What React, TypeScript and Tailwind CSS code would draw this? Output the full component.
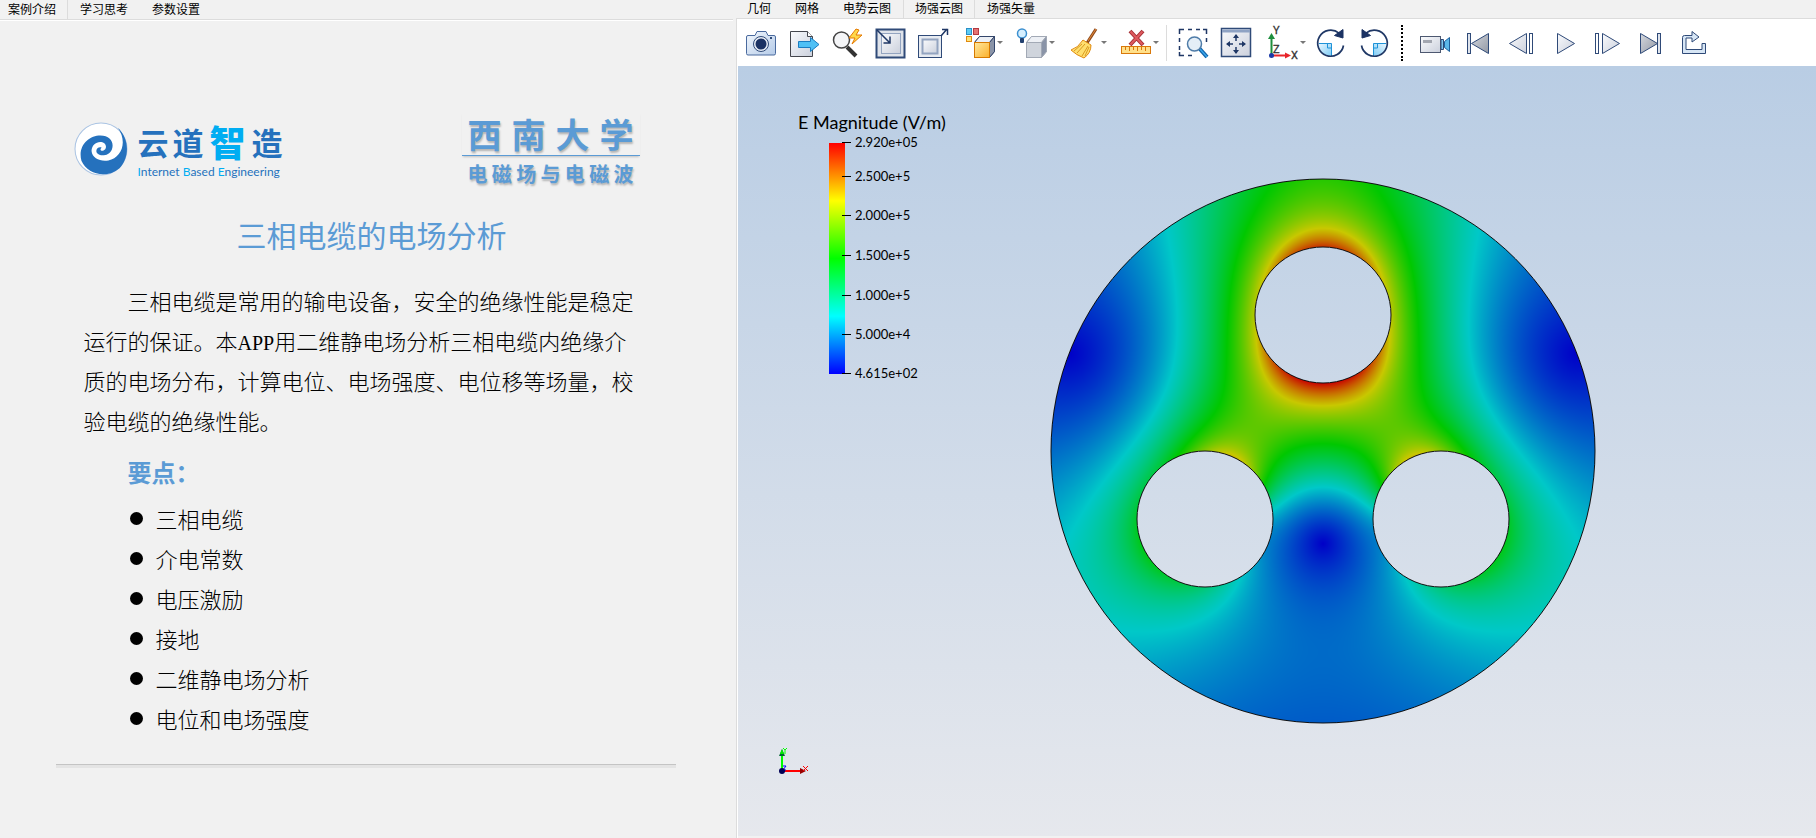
import {useEffect, useRef} from "react";
import type {ReactNode} from "react";

const SIZE = 546;
const OUTER = 272;
const HOLE = 68;

// conductor centres relative to the cable axis, y up, and their potentials
const CONDUCTORS = [
    {x: 0, y: 136, v: 1},
    {x: -118, y: -68, v: -0.5},
    {x: 118, y: -68, v: -0.5},
];

const PER_CONDUCTOR = 16;

type Charge = {x: number; y: number; ix: number; iy: number; k: number; q: number};

const solveLinear = (a: number[][], b: number[]) => {
    const n = b.length;
    for (let c = 0; c < n; c++) {
        let p = c;
        for (let r = c + 1; r < n; r++) if (Math.abs(a[r][c]) > Math.abs(a[p][c])) p = r;
        [a[c], a[p]] = [a[p], a[c]];
        [b[c], b[p]] = [b[p], b[c]];
        for (let r = c + 1; r < n; r++) {
            const f = a[r][c] / a[c][c];
            for (let j = c; j < n; j++) a[r][j] -= f * a[c][j];
            b[r] -= f * b[c];
        }
    }
    const out = new Array<number>(n).fill(0);
    for (let r = n - 1; r >= 0; r--) {
        let s = b[r];
        for (let j = r + 1; j < n; j++) s -= a[r][j] * out[j];
        out[r] = s / a[r][r];
    }
    return out;
};

// charge simulation: line charges inside each conductor, mirrored in the grounded sheath
const buildCharges = () => {
    const charges: Charge[] = [];
    const points: {x: number; y: number; v: number}[] = [];
    CONDUCTORS.forEach((c) => {
        for (let i = 0; i < PER_CONDUCTOR; i++) {
            const t = (2 * Math.PI * (i + 0.5)) / PER_CONDUCTOR;
            const x = c.x + HOLE * 0.55 * Math.cos(t);
            const y = c.y + HOLE * 0.55 * Math.sin(t);
            const m = (OUTER * OUTER) / (x * x + y * y);
            charges.push({x, y, ix: x * m, iy: y * m, k: Math.log(Math.hypot(x, y) / OUTER), q: 0});
            points.push({x: c.x + HOLE * Math.cos(t), y: c.y + HOLE * Math.sin(t), v: c.v});
        }
    });
    const a = points.map((p) => charges.map((s) =>
        Math.log(Math.hypot(p.x - s.ix, p.y - s.iy) / Math.hypot(p.x - s.x, p.y - s.y)) + s.k));
    const q = solveLinear(a, points.map((p) => p.v));
    charges.forEach((s, i) => {
        s.q = q[i];
    });
    return charges;
};

const fieldAt = (charges: Charge[], x: number, y: number) => {
    let ex = 0;
    let ey = 0;
    for (const s of charges) {
        const dx = x - s.x, dy = y - s.y, d = dx * dx + dy * dy;
        const gx = x - s.ix, gy = y - s.iy, g = gx * gx + gy * gy;
        ex += s.q * (dx / d - gx / g);
        ey += s.q * (dy / d - gy / g);
    }
    return Math.hypot(ex, ey);
};

// blue - cyan - green - yellow - red
const colorAt = (t: number) => {
    const s = Math.min(1, Math.max(0, t)) * 4;
    const l = 200;
    if (s < 1) return [0, s * l, l];
    if (s < 2) return [0, l, (2 - s) * l];
    if (s < 3) return [(s - 2) * l, l, 0];
    return [l, (4 - s) * l, 0];
};

const FieldPlot = () => {
    const ref = useRef<HTMLCanvasElement>(null);

    useEffect(() => {
        const ctx = ref.current?.getContext("2d");
        if (!ctx) return;
        const charges = buildCharges();
        const max = fieldAt(charges, 0, CONDUCTORS[0].y - HOLE);
        const img = ctx.createImageData(SIZE, SIZE);
        for (let py = 0; py < SIZE; py++) {
            for (let px = 0; px < SIZE; px++) {
                const x = px + 0.5 - SIZE / 2;
                const y = SIZE / 2 - py - 0.5;
                if (Math.hypot(x, y) > OUTER) continue;
                if (CONDUCTORS.some((c) => Math.hypot(x - c.x, y - c.y) < HOLE)) continue;
                const [r, g, b] = colorAt(fieldAt(charges, x, y) / max);
                img.data.set([r, g, b, 255], (py * SIZE + px) * 4);
            }
        }
        ctx.putImageData(img, 0, 0);
        ctx.strokeStyle = "#111";
        ctx.lineWidth = 1;
        [{x: 0, y: 0, r: OUTER}, ...CONDUCTORS.map((c) => ({...c, r: HOLE}))].forEach((c) => {
            ctx.beginPath();
            ctx.arc(SIZE / 2 + c.x, SIZE / 2 - c.y, c.r, 0, Math.PI * 2);
            ctx.stroke();
        });
    }, []);

    return <canvas ref={ref} width={SIZE} height={SIZE} role="img" aria-label="场强云图"/>;
};

const TICKS = [
    {label: "2.920e+05", y: 42},
    {label: "2.500e+5", y: 76},
    {label: "2.000e+5", y: 115},
    {label: "1.500e+5", y: 155},
    {label: "1.000e+5", y: 195},
    {label: "5.000e+4", y: 234},
    {label: "4.615e+02", y: 273},
];

const Legend = () => (
    <svg className="absolute left-[60px] top-[34px]" width="160" height="290" fontFamily="Lato, sans-serif">
        <defs>
            <linearGradient id="scale" x1="0" y1="0" x2="0" y2="1">
                <stop offset="0" stopColor="#f00"/>
                <stop offset="0.25" stopColor="#ff0"/>
                <stop offset="0.5" stopColor="#0f0"/>
                <stop offset="0.75" stopColor="#0ff"/>
                <stop offset="1" stopColor="#00f"/>
            </linearGradient>
        </defs>
        <text x="0" y="29" fontSize="18">E Magnitude (V/m)</text>
        <rect x="31" y="43" width="16" height="231" fill="url(#scale)"/>
        {TICKS.map((t) => <g key={t.label}>
            <rect x="44" y={t.y} width="9" height="1"/>
            <text x="57" y={t.y + 5} fontSize="13">{t.label}</text>
        </g>)}
    </svg>
);

const Triad = () => (
    <svg className="absolute bottom-[55px] left-[38px]" width="36" height="36">
        <path d="M6 26V9" stroke="#0f0" strokeWidth="2"/>
        <path d="M3 11 6 4l3 7z" fill="#063"/>
        <path d="M4 9 6 4l2 5z" fill="#0e0"/>
        <path d="M7 3l2 2 2-2M9 5v4" stroke="#0f0" fill="none"/>
        <path d="M8 26h18" stroke="#f00" strokeWidth="2"/>
        <path d="M24 23l6 3-6 3z" fill="#900"/>
        <path d="M27 21l5 5M32 21l-5 5" stroke="#f00"/>
        <path d="M7 21h3l-3 4h3" stroke="#00f" fill="none"/>
        <circle cx="6" cy="26" r="3" fill="#005"/>
    </svg>
);

const NAVY = "#2f4a78";

const Icon = ({children}: {children: ReactNode}) => (
    <svg className="shrink-0 overflow-visible" width="32" height="32" viewBox="0 0 32 32" fill="none">{children}</svg>
);

const Cube = ({front, edge}: {front: string; edge: string}) => <>
    <path d="M10.500 15.500l5-6h15v15l-5 6z" fill="#b9c0cc" stroke={edge} strokeLinejoin="round"/>
    <path d="M10.500 15.500l5-6h15l-5 6z" fill="#edf0f5" stroke={edge} strokeLinejoin="round"/>
    <path d="M25.500 15.500l5-6v15l-5 6z" fill="#8a94a8" stroke={edge} strokeLinejoin="round"/>
    <rect x="10.500" y="15.500" width="15" height="15" fill={front} stroke={edge === "#34466b" ? "#d77a00" : edge}/>
</>;

const CameraIcon = () => <Icon>
    <path d="M3 8.500h7l2-4h9l2 4h6q1.500 0 1.500 1.500v16.500q0 1.500-1.500 1.500H3q-1.500 0-1.500-1.500V10q0-1.500 1.500-1.500z"
          fill="url(#glass)" stroke="#4a6a9e"/>
    <circle cx="16" cy="17" r="7.500" fill="#e8edf5" stroke={NAVY}/>
    <circle cx="16" cy="17" r="5.500" fill="#1b3263"/>
    <rect x="25" y="10" width="2" height="2" fill={NAVY}/>
</Icon>;

const ExportIcon = () => <Icon>
    <path d="M2.500 4.500h17l5 5v20h-22z" fill="url(#metal)" stroke="#44464d"/>
    <path d="M19.500 4.500v5h5" fill="#fff" stroke="#44464d"/>
    <path d="M10.500 14.500h12v-4l8.500 7-8.500 7v-4h-12z" fill="#4fc0f5" stroke="#1b7cc0"/>
</Icon>;

const ProbeIcon = () => <Icon>
    <path d="M16 20l9 9" stroke="#333" strokeWidth="4"/>
    <circle cx="10.500" cy="13" r="8" fill="#f4f5f7" stroke="#444" strokeWidth="1.500"/>
    <path d="M25 2l-7 9h6l-3 6 10-9h-6l3-5z" fill="#ffd84a" stroke="#e57a00"/>
</Icon>;

const ShrinkIcon = () => <Icon>
    <rect x="2.500" y="2.500" width="28" height="28" fill="#dfe3ea" stroke={NAVY} strokeWidth="2"/>
    <rect x="7.500" y="6.500" width="19" height="20" fill="url(#metal)" stroke="#93a4c0"/>
    <path d="M3 3l13 13M16 9.500v6.500h-6.500" stroke="#1f3765" strokeWidth="1.500"/>
</Icon>;

const GrowIcon = () => <Icon>
    <rect x="1.500" y="8.500" width="23" height="22" fill="#e7ebf1" stroke={NAVY}/>
    <rect x="5.500" y="12.500" width="15" height="14" fill="url(#metal)" stroke="#93a4c0" strokeWidth="2"/>
    <path d="M24 9l6-7M25 2.500h5.500v5.500" stroke="#1f3765" strokeWidth="1.500"/>
</Icon>;

const ColorCubeIcon = () => <Icon>
    <rect x="2.500" y="1.500" width="5" height="6" fill="#5ccbf5" stroke="#2a8fc5"/>
    <rect x="9.500" y="1.500" width="5" height="6" fill="#e57373" stroke="#b33a41"/>
    <rect x="2.500" y="9.500" width="5" height="5" fill="#ffe27a" stroke="#e08a10"/>
    <Cube front="url(#gold)" edge="#34466b"/>
</Icon>;

const LightCubeIcon = () => <Icon>
    <Cube front="#cfd4dc" edge="#a2a9b5"/>
    <circle cx="6" cy="6.500" r="4.500" fill="#d5efff" stroke="#3b8fd0" strokeWidth="1.500"/>
    <rect x="4" y="11" width="4" height="5" rx="1" fill="#22406f"/>
</Icon>;

const BroomIcon = () => <Icon>
    <path d="M28 2L19 16" stroke="#8d4a1c" strokeWidth="3"/>
    <path d="M28 2L20 14" stroke="#e58a3a"/>
    <path d="M15 13l8 5q0 8-7 13Q8 28 3 23q7-2 12-10z" fill="#ffdf6e" stroke="#e08a10"/>
    <path d="M17 17l-8 9M20 19l-6 10M14 17l-8 7M21 20l-4 9" stroke="#d99a20"/>
</Icon>;

const ClearRulerIcon = () => <Icon>
    <path d="M10 4l13 14M23 4L10 18" stroke="#a52f35" strokeWidth="4"/>
    <path d="M10.500 4.500l12 13M22.500 4.500l-12 13" stroke="#de5a5f" strokeWidth="2"/>
    <rect x="1.500" y="19.500" width="29" height="7" fill="#ffe08a" stroke="#d9780a"/>
    <path d="M5.500 20v3M9.500 20v4M13.500 20v3M17.500 20v4M21.500 20v3M25.500 20v4" stroke="#d9780a"/>
</Icon>;

const BoxZoomIcon = () => <Icon>
    <path d="M2.500 7V2.500H7M11 2.500h4M19 2.500h4M26 2.500h3.500V7M29.500 11v4M2.500 11v4M2.500 19v4M2.500 25v3.500H7M11 28.500h4"
          stroke="#1f3765" strokeWidth="1.500"/>
    <path d="M22 21l8 9" stroke="#0f62a8" strokeWidth="4"/>
    <path d="M23 22l7 8" stroke="#3aa5ea" strokeWidth="1.500"/>
    <circle cx="17.500" cy="17" r="7" fill="#e4eef7" stroke="#4f7ca8" strokeWidth="1.500"/>
</Icon>;

const FitIcon = () => <Icon>
    <rect x="1.500" y="1.500" width="29" height="28" fill="url(#metal)" stroke={NAVY} strokeWidth="1.500"/>
    <path d="M2 4h28" stroke="#8fa3c4" strokeWidth="3"/>
    <path d="M16 8v6M16 26v-6M7 17h6M25 17h-6" stroke="#1f3765" strokeWidth="1.500"/>
    <path d="M13 11l3-4 3 4zM13 23l3 4 3-4zM10 14l-4 3 4 3zM22 14l4 3-4 3z" fill="#1f3765"/>
</Icon>;

const AxesIcon = () => <Icon>
    <path d="M4.500 28V9" stroke="#1e8f3e" strokeWidth="2"/>
    <path d="M1 12l3.500-6L8 12z" fill="#1e8f3e"/>
    <path d="M5 28.500h14" stroke="#e8252a" strokeWidth="2"/>
    <path d="M18 25.500l6 3-6 3z" fill="#e8252a"/>
    <circle cx="4.500" cy="28.500" r="2.500" fill="#1b3aa8"/>
    <g fontFamily="Roboto, sans-serif" fontSize="11" fill="#333" stroke="#333" strokeWidth="0.300">
        <text x="6" y="7">Y</text>
        <text x="6" y="26">Z</text>
        <text x="24" y="32">X</text>
    </g>
</Icon>;

const RotateShape = () => <>
    <path d="M3.500 16.500H17v12.500Q4 28 3.500 16.500z" fill="url(#sky)"/>
    <path d="M4 16.500h12.500V29" stroke="#1f93d8"/>
    <path d="M12.500 17v4h4" stroke="#1f93d8"/>
    <path d="M28.500 18.500A13 13 0 1 1 24 6.200" stroke="#1f3765" strokeWidth="1.700"/>
    <path d="M28 2.500V11l-8.500-2.500z" fill="#1b3263" stroke="#1b3263"/>
</>;

const RotateCwIcon = () => <Icon><RotateShape/></Icon>;
const RotateCcwIcon = () => <Icon><g transform="matrix(-1 0 0 1 32 0)"><RotateShape/></g></Icon>;

const RecordIcon = () => <Icon>
    <rect x="1.500" y="9.500" width="20" height="16" fill="url(#metal)" stroke="#4d5870"/>
    <rect x="4" y="13" width="9" height="3" fill="#a2a6b0"/>
    <path d="M22 12.500h2.500v10H22z" fill="#7cc8f0" stroke={NAVY}/>
    <path d="M30.500 10.500v14l-5-4v-6z" fill="#5cb8ea" stroke="#1d5f9c"/>
</Icon>;

const FirstIcon = () => <Icon>
    <rect x="5.500" y="6.500" width="3" height="20" fill="#dfe4ec" stroke={NAVY}/>
    <path d="M26.500 6.500v20L9.500 16.500z" fill="url(#steel)" stroke={NAVY}/>
</Icon>;

const PrevIcon = () => <Icon>
    <path d="M21.500 6.500v20L4.500 16.500z" fill="url(#metal)" stroke={NAVY}/>
    <rect x="24.500" y="6.500" width="3" height="20" fill="#fff" stroke={NAVY}/>
</Icon>;

const PlayIcon = () => <Icon>
    <path d="M9.500 6.500v20l17-10z" fill="url(#metal)" stroke={NAVY}/>
</Icon>;

const NextIcon = () => <Icon>
    <rect x="4.500" y="6.500" width="3" height="20" fill="#fff" stroke={NAVY}/>
    <path d="M11.500 6.500v20l17-10z" fill="url(#metal)" stroke={NAVY}/>
</Icon>;

const LastIcon = () => <Icon>
    <path d="M6.500 6.500v20l17-10z" fill="url(#steel)" stroke={NAVY}/>
    <rect x="23.500" y="6.500" width="3" height="20" fill="#dfe4ec" stroke={NAVY}/>
</Icon>;

const LoopIcon = () => <Icon>
    <path d="M5.500 26.500V10.500q0-2 2-2h7.500V4.500l7 5.500-7 5v-4H9v11.500h16v-6h3.500v10z" fill="#d7e6f5"
          stroke={NAVY} strokeLinejoin="round"/>
</Icon>;

type ToolProps = {label: string; icon: ReactNode; menu?: boolean};

const Tool = ({label, icon, menu}: ToolProps) => (
    <button aria-label={label}
            className={menu ? "flex h-full w-[52px] shrink-0 items-center gap-px pl-2.5" : "flex h-full w-[43px] shrink-0 items-center justify-center"}>
        {icon}
        {menu && <svg width="6" height="4" className="shrink-0"><path d="M0 0h6L3 3z" fill="#777"/></svg>}
    </button>
);

const Toolbar = () => (
    <div className="flex h-[47px] items-center overflow-hidden bg-white pl-px">
        <svg width="0" height="0" className="absolute">
            <defs>
                <linearGradient id="metal" x1="0" y1="0" x2="1" y2="1">
                    <stop offset="0" stopColor="#fafbfd"/>
                    <stop offset="1" stopColor="#cbd0dc"/>
                </linearGradient>
                <linearGradient id="glass" x1="0" y1="0" x2="1" y2="1">
                    <stop offset="0" stopColor="#f2f7fd"/>
                    <stop offset="1" stopColor="#b5cbe8"/>
                </linearGradient>
                <linearGradient id="steel" x1="0" y1="0" x2="1" y2="1">
                    <stop offset="0" stopColor="#d5d8de"/>
                    <stop offset="1" stopColor="#9298a4"/>
                </linearGradient>
                <linearGradient id="gold" x1="0" y1="0" x2="1" y2="1">
                    <stop offset="0" stopColor="#ffe9a0"/>
                    <stop offset="1" stopColor="#fbb02a"/>
                </linearGradient>
                <linearGradient id="sky" x1="0" y1="0" x2="1" y2="1">
                    <stop offset="0" stopColor="#eaf7ff"/>
                    <stop offset="1" stopColor="#7ccbf5"/>
                </linearGradient>
            </defs>
        </svg>
        <Tool label="截图" icon={<CameraIcon/>}/>
        <Tool label="导出" icon={<ExportIcon/>}/>
        <Tool label="探测" icon={<ProbeIcon/>}/>
        <Tool label="缩小" icon={<ShrinkIcon/>}/>
        <Tool label="放大" icon={<GrowIcon/>}/>
        <Tool label="显示" icon={<ColorCubeIcon/>} menu/>
        <Tool label="灯光" icon={<LightCubeIcon/>} menu/>
        <Tool label="清除" icon={<BroomIcon/>} menu/>
        <Tool label="清除测量" icon={<ClearRulerIcon/>} menu/>
        <div className="mx-1 h-9 border-l border-[#dcdcdc]"/>
        <Tool label="框选缩放" icon={<BoxZoomIcon/>}/>
        <Tool label="适应窗口" icon={<FitIcon/>}/>
        <Tool label="视角" icon={<AxesIcon/>} menu/>
        <Tool label="顺时针旋转" icon={<RotateCwIcon/>}/>
        <Tool label="逆时针旋转" icon={<RotateCcwIcon/>}/>
        <div className="ml-1.5 mr-2.5 h-9 border-l-2 border-dotted border-black"/>
        <Tool label="录制" icon={<RecordIcon/>}/>
        <Tool label="首帧" icon={<FirstIcon/>}/>
        <Tool label="上一帧" icon={<PrevIcon/>}/>
        <Tool label="播放" icon={<PlayIcon/>}/>
        <Tool label="下一帧" icon={<NextIcon/>}/>
        <Tool label="末帧" icon={<LastIcon/>}/>
        <Tool label="循环" icon={<LoopIcon/>}/>
    </div>
);

const BrandLogo = () => (
    <div className="flex items-center gap-2.5 pt-1.5">
        <svg width="54" height="54" viewBox="0 0 160 160">
            <circle cx="80" cy="80" r="77" fill="#fff" stroke="#a9c3e3" strokeWidth="3"/>
            <path d="M130 17C165 50 165 105 135 137 95 170 40 155 22 115 10 70 45 40 78 40c30 0 42 22 34 42C104 100 78 104 68 92c-6-10 4-20 14-16-6 4-4 10 4 9 12-3 12-21-2-25C68 56 52 68 52 86c2 22 26 32 50 28C140 106 160 60 130 17z"
                  fill="#2571bd"/>
        </svg>
        <div className="flex flex-col">
            <div className="flex h-[46px] items-center gap-1 text-[31px] leading-none font-bold text-[#2571bd]">
                <span>云</span>
                <span>道</span>
                <span className="px-0.5 text-4xl leading-none font-black text-[#00adf2]">智</span>
                <span>造</span>
            </div>
            <div className="font-[Lato] text-xs text-[#2571bd]">
                <span className="text-[#00adf2]">I</span>nternet <span className="text-[#00adf2]">B</span>ased <span
                className="text-[#00adf2]">E</span>ngineering
            </div>
        </div>
    </div>
);

const SchoolLogo = () => (
    <div className="flex w-[178px] flex-col text-[#5b9bd5] [text-shadow:1px_2px_2px_rgba(0,0,0,0.25)]">
        <div className="flex h-11 items-center justify-between border-b border-[#5b9bd5] px-1.5 text-[34px] leading-none font-bold shadow-[0_2px_2px_-1px_rgba(0,0,0,0.2)]">
            {[..."西南大学"].map((c) => <span key={c}>{c}</span>)}
        </div>
        <div className="flex h-9 items-center justify-between px-1.5 text-xl leading-none font-bold">
            {[..."电磁场与电磁波"].map((c, i) => <span key={i}>{c}</span>)}
        </div>
    </div>
);

const POINTS = ["三相电缆", "介电常数", "电压激励", "接地", "二维静电场分析", "电位和电场强度"];

const Intro = () => (
    <article className="mx-auto w-full max-w-[620px] pt-[92px]">
        <header className="flex h-20 items-start justify-between pl-[18px] pr-9">
            <BrandLogo/>
            <SchoolLogo/>
        </header>
        <h1 className="mt-[22px] pl-3 text-center text-[30px] leading-10 text-[#5b9bd5]">三相电缆的电场分析</h1>
        <div className="pl-7 pr-9 text-[22px] leading-10 text-black">
            <p className="mt-[26px] font-light">
                <span className="pl-11">三相电缆是常用的输电设备，安全的绝缘性能是稳定</span><br/>
                运行的保证。本<span className="font-['Liberation_Serif'] text-xl font-normal">APP</span>用二维静电场分析三相电缆内绝缘介<br/>
                质的电场分布，计算电位、电场强度、电位移等场量，校<br/>
                验电缆的绝缘性能。
            </p>
            <h2 className="mt-3 pl-11 text-2xl leading-10 font-bold text-[#5b9bd5]">要点：</h2>
            <ul className="mt-1.5 pl-[46px] font-light">
                {POINTS.map((p) => <li key={p} className="flex items-center gap-[13px]">
                    <span className="size-[13px] rounded-full bg-black"/>{p}
                </li>)}
            </ul>
        </div>
        <hr className="mt-[26px] h-1 border-[#c4c4c4] bg-[#e4e4e4]"/>
    </article>
);

const TabList = ({tabs, active, className}: {tabs: string[]; active: number; className: string}) => (
    <div role="tablist" className={className}>
        {tabs.map((t, i) => <button key={t} role="tab" aria-selected={i === active}
                                    className={i === active
                                        ? "border-x border-[#dcdcdc] bg-[#f2f2f2] px-[11px] pb-0.5"
                                        : "px-3 pb-0.5"}>
            {t}
        </button>)}
    </div>
);

const App = () => {
    return <div
        className="grid min-h-screen grid-cols-[735fr_1081fr] bg-[#f1f1f1] font-['Noto_Sans_CJK_SC',sans-serif] text-black">
        <section className="flex min-w-0 flex-col">
            <TabList tabs={["案例介绍", "学习思考", "参数设置"]} active={0}
                     className="-ml-1 mr-0.5 flex h-5 border-b border-[#dcdcdc] text-xs leading-4 shadow-[0_1px_0_#fff]"/>
            <div className="pr-1"><Intro/></div>
        </section>
        <section className="flex min-w-0 flex-col">
            <TabList tabs={["几何", "网格", "电势云图", "场强云图", "场强矢量"]} active={3}
                     className="flex h-[18px] text-xs leading-4"/>
            <div className="ml-px flex grow flex-col border-l border-t border-[#dcdcdc] bg-white pl-px">
                <Toolbar/>
                <div
                    className="relative flex grow items-center justify-center bg-linear-to-b from-[#b9cde4] to-[#e6e8ed] pl-[92px]">
                    <Legend/>
                    <FieldPlot/>
                    <Triad/>
                </div>
                <div className="h-0.5 bg-[#f1f1f1]"/>
            </div>
        </section>
    </div>;
};

export default App;
